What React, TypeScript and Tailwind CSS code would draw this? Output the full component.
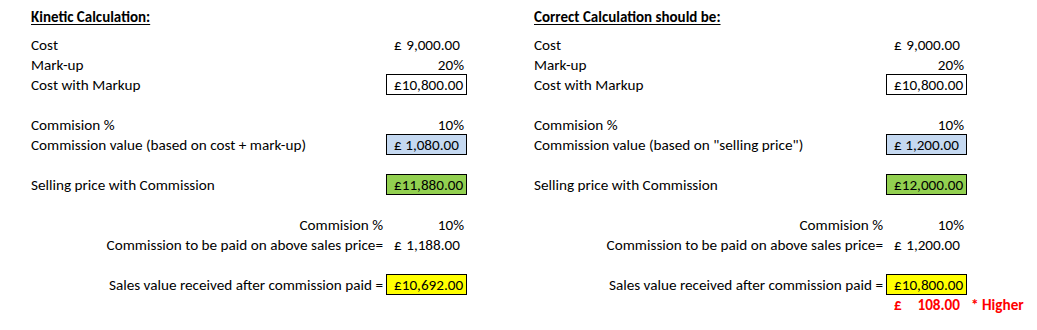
import React from "react";

type Box = "plain" | "blue" | "green" | "yellow";
type Row =
  | { kind: "blank" }
  | { kind: "label"; label: string; value?: React.ReactNode; box?: Box }
  | { kind: "right"; label: string; value?: React.ReactNode; box?: Box }
  | { kind: "red" };

function Money({ amount, red }: { amount: string; red?: boolean }) {
  return (
    <div className={`flex h-[20px] justify-between pl-[8px] pr-[7px] ${red ? "font-bold text-[#ff0000]" : ""}`}>
      <span>£</span>
      <span>{amount}</span>
    </div>
  );
}

function Pct({ v }: { v: string }) {
  return <div className="h-[20px] pr-[3px] text-right">{v}</div>;
}

function ValueCell({ value, box }: { value?: React.ReactNode; box?: Box }) {
  if (!box) return <div className="h-[20px]">{value}</div>;
  const bg =
    box === "blue" ? "bg-[#c5d9f1]" : box === "green" ? "bg-[#92d050]" : box === "yellow" ? "bg-[#ffff00]" : "bg-white";
  return (
    <div className="h-[20px]">
      <div className={`-mb-px h-[21px] border border-black ${bg}`}>
        <div className="-ml-px -mt-px h-[20px]">{value}</div>
      </div>
    </div>
  );
}

function Panel({ title, labelW, rows }: { title: string; labelW: string; rows: Row[] }) {
  return (
    <div className="flex flex-col">
      <div className="h-[20px] whitespace-nowrap text-[15px] font-bold underline decoration-1 underline-offset-[2px]">
        {title}
      </div>
      <div className="h-[8px]" />
      {rows.map((r, i) => {
        if (r.kind === "blank") return <div key={i} className="h-[20px]" />;
        if (r.kind === "red")
          return (
            <div key={i} className="flex h-[20px]">
              <div className={labelW} />
              <div className="w-[81px]">
                <Money amount="108.00" red />
              </div>
              <div className="whitespace-nowrap pl-[4px] font-bold text-[#ff0000]">* Higher</div>
            </div>
          );
        return (
          <div key={i} className="flex h-[20px]">
            <div className={`${labelW} h-[20px] whitespace-nowrap ${r.kind === "right" ? "pr-[3px] text-right" : ""}`}>
              {r.label}
            </div>
            <div className="w-[81px]">
              <ValueCell value={r.value} box={r.box} />
            </div>
          </div>
        );
      })}
    </div>
  );
}

export default function App() {
  const left: Row[] = [
    { kind: "label", label: "Cost", value: <Money amount="9,000.00" /> },
    { kind: "label", label: "Mark-up", value: <Pct v="20%" /> },
    { kind: "label", label: "Cost with Markup", value: <Money amount="10,800.00" />, box: "plain" },
    { kind: "blank" },
    { kind: "label", label: "Commision %", value: <Pct v="10%" /> },
    { kind: "label", label: "Commission value (based on cost + mark-up)", value: <Money amount="1,080.00" />, box: "blue" },
    { kind: "blank" },
    { kind: "label", label: "Selling price with Commission", value: <Money amount="11,880.00" />, box: "green" },
    { kind: "blank" },
    { kind: "right", label: "Commision %", value: <Pct v="10%" /> },
    { kind: "right", label: "Commission to be paid on above sales price=", value: <Money amount="1,188.00" /> },
    { kind: "blank" },
    { kind: "right", label: "Sales value received after commission paid =", value: <Money amount="10,692.00" />, box: "yellow" },
  ];
  const right: Row[] = [
    { kind: "label", label: "Cost", value: <Money amount="9,000.00" /> },
    { kind: "label", label: "Mark-up", value: <Pct v="20%" /> },
    { kind: "label", label: "Cost with Markup", value: <Money amount="10,800.00" />, box: "plain" },
    { kind: "blank" },
    { kind: "label", label: "Commision %", value: <Pct v="10%" /> },
    { kind: "label", label: 'Commission value (based on "selling price")', value: <Money amount="1,200.00" />, box: "blue" },
    { kind: "blank" },
    { kind: "label", label: "Selling price with Commission", value: <Money amount="12,000.00" />, box: "green" },
    { kind: "blank" },
    { kind: "right", label: "Commision %", value: <Pct v="10%" /> },
    { kind: "right", label: "Commission to be paid on above sales price=", value: <Money amount="1,200.00" /> },
    { kind: "blank" },
    { kind: "right", label: "Sales value received after commission paid =", value: <Money amount="10,800.00" />, box: "yellow" },
    { kind: "red" },
  ];
  return (
    <div className="h-[330px] w-[1037px] overflow-hidden bg-white font-['Carlito','Calibri','Lato',sans-serif] text-[15.2px] leading-[22px] text-black">
      <div className="flex pt-[6px]">
        <div className="ml-[31px]">
          <Panel title="Kinetic Calculation:" labelW="w-[355px]" rows={left} />
        </div>
        <div className="ml-[67px]">
          <Panel title="Correct Calculation should be:" labelW="w-[352px]" rows={right} />
        </div>
      </div>
    </div>
  );
}
